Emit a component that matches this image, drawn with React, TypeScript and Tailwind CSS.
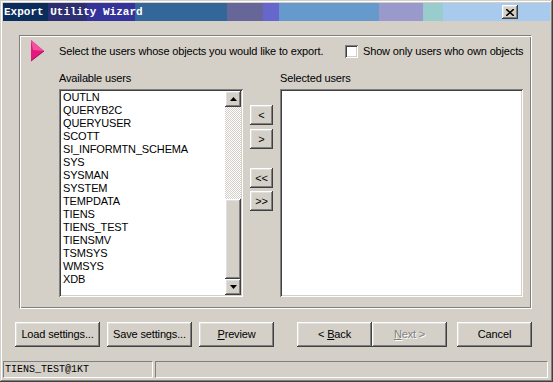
import React from 'react';

const raised = "bg-[#d4d0c8] shadow-[inset_-1px_-1px_#404040,inset_1px_1px_#ffffff,inset_-2px_-2px_#808080,inset_2px_2px_#dfdfdf]";
const sunken = "bg-white shadow-[inset_1px_1px_#808080,inset_-1px_-1px_#ffffff,inset_2px_2px_#404040,inset_-2px_-2px_#d4d0c8]";

const users = [
  "OUTLN", "QUERYB2C", "QUERYUSER", "SCOTT", "SI_INFORMTN_SCHEMA", "SYS", "SYSMAN", "SYSTEM",
  "TEMPDATA", "TIENS", "TIENS_TEST", "TIENSMV", "TSMSYS", "WMSYS", "XDB",
];

function Arrow({ up }: { up: boolean }) {
  return (
    <svg width="7" height="4" viewBox="0 0 7 4">
      <polygon points={up ? "3.5,0 7,4 0,4" : "0,0 7,0 3.5,4"} fill="#000" />
    </svg>
  );
}

function Btn({ w, children, disabled }: { w: string; children: React.ReactNode; disabled?: boolean }) {
  return (
    <div className={`${raised} ${w} h-[25px] flex items-center justify-center ${disabled ? "text-[#808080] [text-shadow:1px_1px_#fff]" : "text-black"}`}>
      {children}
    </div>
  );
}

export default function App() {
  return (
    <div className="w-[553px] h-[382px] bg-[#d4d0c8] p-[3px] flex flex-col font-['Liberation_Sans',Arial,sans-serif] text-[11px] leading-[13px] tracking-[-0.15px] text-black shadow-[inset_-1px_-1px_#404040,inset_1px_1px_#d4d0c8,inset_-2px_-2px_#808080,inset_2px_2px_#ffffff]">
      {/* title bar */}
      <div className="h-[18px] flex items-center justify-between pl-[1px] pr-[32px] bg-[linear-gradient(90deg,#0a2d5c_0px,#0a2d5c_45px,#2e2e72_45px,#2e2e72_84px,#333399_84px,#333399_132px,#336699_132px,#336699_224px,#666699_224px,#666699_260px,#6666cc_260px,#6666cc_276px,#6699cc_276px,#6699cc_376px,#9999cc_376px,#9999cc_420px,#99cccc_420px,#99cccc_440px,#a8caec_440px)]">
        <span className="font-['Liberation_Mono',monospace] font-bold text-[11px] tracking-normal text-white">Export Utility Wizard</span>
        <div className={`${raised} w-[16px] h-[14px] flex items-center justify-center`}>
          <svg width="8" height="7" viewBox="0 0 8 7">
            <path d="M0 0 L8 7 M8 0 L0 7" stroke="#000" strokeWidth="1.6" />
          </svg>
        </div>
      </div>

      {/* main panel */}
      <div className="ml-[16px] mt-[14px] w-[513px] h-[274px] border border-t-[#808080] border-l-[#808080] border-b-white border-r-white shadow-[inset_1px_1px_#ffffff,inset_-1px_-1px_#808080]">
        <div className="flex items-center h-[22px] mt-[4px] pl-[11px]">
          <svg width="14" height="22" viewBox="0 0 14 22">
            <polygon points="0,0 13,11 0,21" fill="#e4177d" />
            <polygon points="0,0 13,11 2,10" fill="#f3509f" />
            <polyline points="13,11 0,21" stroke="#a00c52" strokeWidth="1" fill="none" />
          </svg>
          <span className="ml-[14px] w-[286px]">Select the users whose objects you would like to export.</span>
          <div className={`${sunken} w-[13px] h-[13px]`} />
          <span className="ml-[5px]">Show only users who own objects</span>
        </div>

        <div className="flex mt-[10px] h-[13px]">
          <span className="ml-[39px] w-[221px]">Available users</span>
          <span>Selected users</span>
        </div>

        <div className="flex mt-[4px] ml-[39px] h-[208px]">
          {/* available list */}
          <div className={`${sunken} w-[184px] h-[208px] p-[2px] flex`}>
            <div className="flex-1 pl-[2px]">
              {users.map((u) => (
                <div key={u} className="h-[13px] whitespace-nowrap">{u}</div>
              ))}
            </div>
            <div className="w-[16px] flex flex-col">
              <div className={`${raised} h-[16px] flex items-center justify-center`}><Arrow up /></div>
              <div className="h-[92px] bg-[repeating-conic-gradient(#ffffff_0_25%,#d4d0c8_0_50%)] bg-[length:2px_2px]" />
              <div className={`${raised} h-[80px]`} />
              <div className={`${raised} h-[16px] flex items-center justify-center`}><Arrow up={false} /></div>
            </div>
          </div>

          {/* move buttons */}
          <div className="ml-[7px] w-[23px] flex flex-col pt-[16px]">
            <div className={`${raised} h-[20px] flex items-center justify-center`}>&lt;</div>
            <div className={`${raised} h-[20px] mt-[4px] flex items-center justify-center`}>&gt;</div>
            <div className={`${raised} h-[20px] mt-[19px] flex items-center justify-center`}>&lt;&lt;</div>
            <div className={`${raised} h-[20px] mt-[3px] flex items-center justify-center`}>&gt;&gt;</div>
          </div>

          {/* selected list */}
          <div className={`${sunken} ml-[7px] w-[243px] h-[208px]`} />
        </div>
      </div>

      {/* bottom buttons */}
      <div className="flex mt-[13px] ml-[12px] h-[25px]">
        <Btn w="w-[85px]">Load settings...</Btn>
        <div className="ml-[7px]"><Btn w="w-[85px]">Save settings...</Btn></div>
        <div className="ml-[7px]"><Btn w="w-[75px]"><span><span className="underline">P</span>review</span></Btn></div>
        <div className="ml-[23px]"><Btn w="w-[75px]"><span>&lt; <span className="underline">B</span>ack</span></Btn></div>
        <Btn w="w-[75px]" disabled><span><span className="underline">N</span>ext &gt;</span></Btn>
        <div className="ml-[10px]"><Btn w="w-[75px]">Cancel</Btn></div>
      </div>

      {/* status bar */}
      <div className="flex mt-auto h-[17px] mb-[1px]">
        <div className="w-[150px] border border-t-[#808080] border-l-[#808080] border-b-white border-r-white pl-[1px] flex items-center font-['Liberation_Mono',monospace] text-[10px] tracking-normal">TIENS_TEST@1KT</div>
        <div className="flex-1 ml-[2px] mr-[2px] border border-t-[#808080] border-l-[#808080] border-b-white border-r-white" />
      </div>
    </div>
  );
}
